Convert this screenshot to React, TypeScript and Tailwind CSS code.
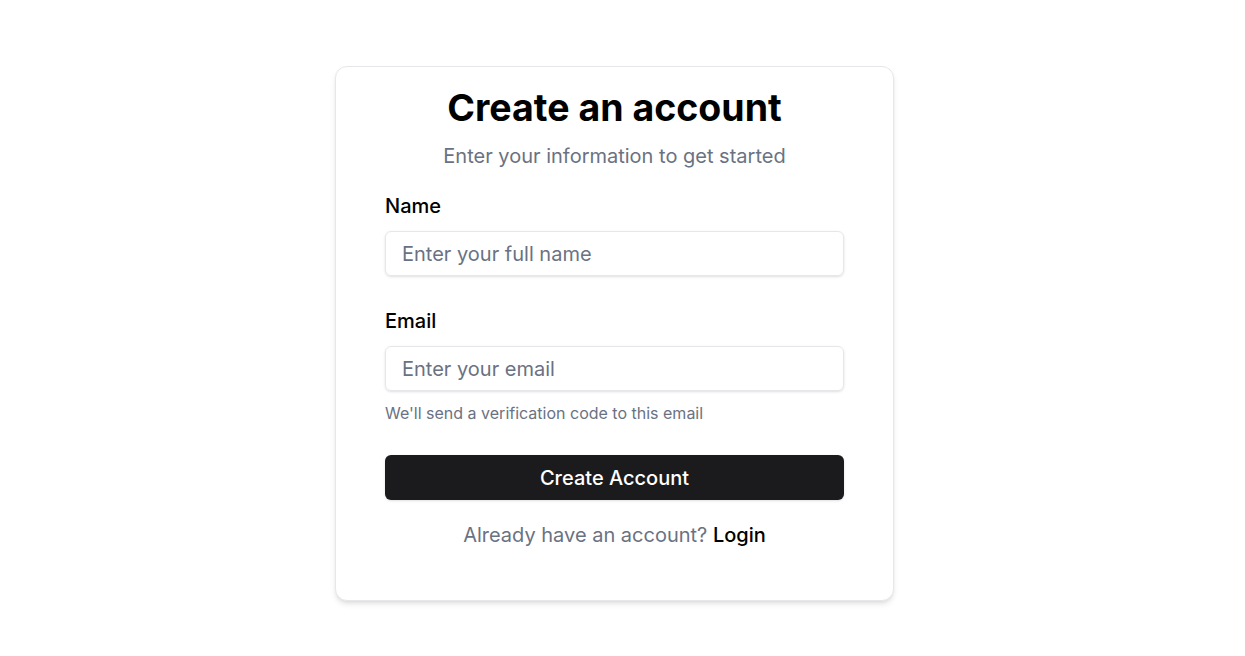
export default function App() {
  return (
    <div className="min-h-screen bg-white pt-[66px] pr-[16px] flex justify-center font-['Inter',sans-serif]">
      <div className="w-[559px] h-[535px] rounded-xl border border-gray-200 bg-white shadow-md px-[49px] pt-[21px]">
        <h1 className="text-center text-[37.5px] leading-10 font-bold text-black">Create an account</h1>
        <p className="mt-[14px] text-center text-xl leading-7 text-gray-500">Enter your information to get started</p>

        <div className="mt-[22px]">
          <label className="block text-xl leading-7 font-medium text-black">Name</label>
          <input
            type="text"
            placeholder="Enter your full name"
            className="mt-[11px] w-full h-[45px] rounded-md border border-gray-200 shadow-sm px-4 text-xl text-black placeholder:text-gray-500 outline-none"
          />
        </div>

        <div className="mt-[31px]">
          <label className="block text-xl leading-7 font-medium text-black">Email</label>
          <input
            type="email"
            placeholder="Enter your email"
            className="mt-[11px] w-full h-[45px] rounded-md border border-gray-200 shadow-sm px-4 text-xl text-black placeholder:text-gray-500 outline-none"
          />
          <p className="mt-[10px] text-base leading-6 text-gray-500">We'll send a verification code to this email</p>
        </div>

        <button className="mt-[30px] w-full h-[45px] rounded-md bg-[#1b1b1d] text-white text-xl font-medium shadow-sm">
          Create Account
        </button>

        <p className="mt-[21px] text-center text-xl leading-7 text-gray-500">
          Already have an account? <a className="font-medium text-black">Login</a>
        </p>
      </div>
    </div>
  );
}
